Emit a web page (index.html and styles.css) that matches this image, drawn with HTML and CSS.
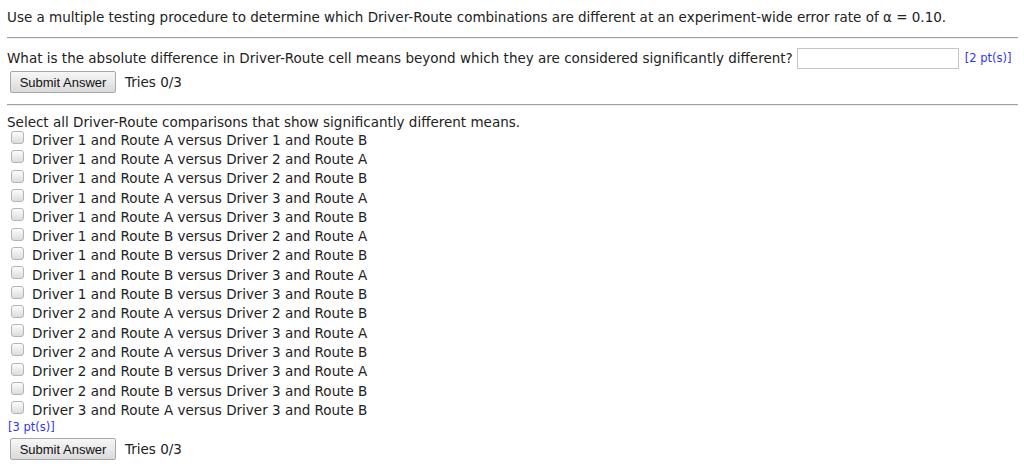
FILE: index.html
```html
<!DOCTYPE html>
<html>
<head>
<meta charset="utf-8">
<link rel="stylesheet" href="styles.css">
</head>
<body>
<div class="page">
  <p class="intro">Use a multiple testing procedure to determine which Driver-Route combinations are different at an experiment-wide error rate of α = 0.10.</p>
  <hr class="rule">
  <div class="question">
    <div class="qline">
      <span class="qtext">What is the absolute difference in Driver-Route cell means beyond which they are considered significantly different?</span>
      <input class="answer" type="text">
      <span class="pts">[2 pt(s)]</span>
    </div>
    <div class="submit-row">
      <button class="submit">Submit Answer</button>
      <span class="tries">Tries 0/3</span>
    </div>
  </div>
  <hr class="rule rule2">
  <div class="question">
    <div class="prompt">Select all Driver-Route comparisons that show significantly different means.</div>
    <ul class="options">
      <li><input type="checkbox"><span>Driver 1 and Route A versus Driver 1 and Route B</span></li>
      <li><input type="checkbox"><span>Driver 1 and Route A versus Driver 2 and Route A</span></li>
      <li><input type="checkbox"><span>Driver 1 and Route A versus Driver 2 and Route B</span></li>
      <li><input type="checkbox"><span>Driver 1 and Route A versus Driver 3 and Route A</span></li>
      <li><input type="checkbox"><span>Driver 1 and Route A versus Driver 3 and Route B</span></li>
      <li><input type="checkbox"><span>Driver 1 and Route B versus Driver 2 and Route A</span></li>
      <li><input type="checkbox"><span>Driver 1 and Route B versus Driver 2 and Route B</span></li>
      <li><input type="checkbox"><span>Driver 1 and Route B versus Driver 3 and Route A</span></li>
      <li><input type="checkbox"><span>Driver 1 and Route B versus Driver 3 and Route B</span></li>
      <li><input type="checkbox"><span>Driver 2 and Route A versus Driver 2 and Route B</span></li>
      <li><input type="checkbox"><span>Driver 2 and Route A versus Driver 3 and Route A</span></li>
      <li><input type="checkbox"><span>Driver 2 and Route A versus Driver 3 and Route B</span></li>
      <li><input type="checkbox"><span>Driver 2 and Route B versus Driver 3 and Route A</span></li>
      <li><input type="checkbox"><span>Driver 2 and Route B versus Driver 3 and Route B</span></li>
      <li><input type="checkbox"><span>Driver 3 and Route A versus Driver 3 and Route B</span></li>
    </ul>
    <div class="pts pts-block">[3 pt(s)]</div>
    <div class="submit-row">
      <button class="submit">Submit Answer</button>
      <span class="tries">Tries 0/3</span>
    </div>
  </div>
</div>
</body>
</html>
```

FILE: styles.css
```css
html, body {
  margin: 0;
  padding: 0;
  background: #fff;
}
.page {
  padding: 8px 6px 0 7px;
  font-family: "DejaVu Sans", Verdana, sans-serif;
  font-size: 13.5px;
  color: #222;
}
.intro {
  margin: 0;
  line-height: 18px;
}
.rule {
  margin: 11px 0 0 0;
  border: 0;
  border-top: 1px solid #a0a0a0;
  border-bottom: 1px solid #eee;
  height: 0;
}
.rule2 {
  margin-top: 10px;
}
.question {
  padding-top: 8px;
}
.qline {
  display: flex;
  align-items: center;
  height: 22px;
}
.answer {
  margin: 0 0 0 4px;
  width: 162px;
  height: 21px;
  box-sizing: border-box;
  border: 1px solid #c4c4c4;
  padding: 0;
}
.pts {
  font-size: 11.5px;
  color: #3535f0;
  margin-left: 6px;
}
.submit-row {
  display: flex;
  align-items: center;
  margin-top: 1px;
  height: 24px;
}
.submit {
  margin-left: 3px;
  width: 106px;
  height: 22px;
  font-family: "Liberation Sans", Arial, sans-serif;
  font-size: 13px;
  color: #111;
  background: linear-gradient(#f7f7f7, #dadada);
  border: 1px solid #a8a8a8;
  border-radius: 2px;
  padding: 0;
}
.tries {
  margin-left: 9px;
}
.prompt {
  line-height: 16px;
}
.options {
  list-style: none;
  margin: 0;
  padding: 0;
}
.options li {
  display: flex;
  align-items: center;
  height: 19.3px;
}
.options input {
  appearance: none;
  -webkit-appearance: none;
  margin: 0 0 0 4px;
  width: 13px;
  height: 13px;
  border: 1px solid #b5b5b5;
  border-radius: 3px;
  background: linear-gradient(#fcfcfc, #dcdcdc);
  box-sizing: border-box;
  position: relative;
  top: -2px;
}
.options span {
  margin-left: 8px;
}
.pts-block {
  margin-left: 1px;
  line-height: 17px;
}
```
